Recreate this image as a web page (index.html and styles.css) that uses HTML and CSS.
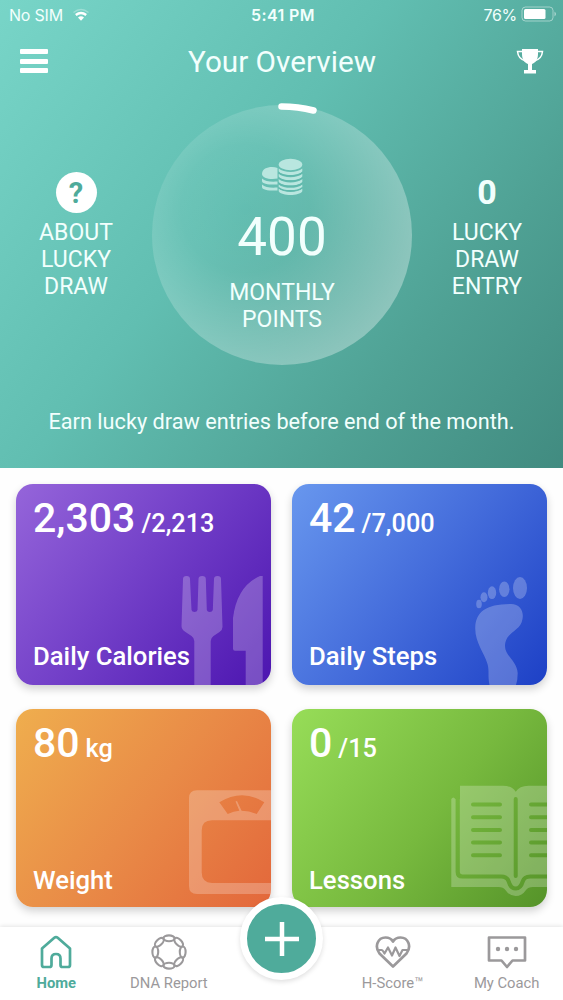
FILE: index.html
```
<!DOCTYPE html>
<html lang="en">
<head>
  <meta charset="UTF-8" />
  <meta name="viewport" content="width=device-width, initial-scale=1" />
  <title>Your Overview</title>
  <link rel="stylesheet" href="styles.css">
</head>
<body>

<section class="hero">
  <div class="status-bar">
    <div class="carrier">
      <span>No SIM</span>
      <svg width="18" height="14" viewBox="0 0 18 14" fill="none" stroke="#fff">
        <path d="M1.500 4.500Q9-1.500 16.500 4.500" stroke-width="1.500" opacity=".3"/>
        <path d="M3.800 7Q9 2.800 14.200 7" stroke-width="2.400"/>
        <path d="M6 9.500Q9 7 12 9.500L9 12.800z" fill="#fff" stroke="none"/>
      </svg>
    </div>
    <div class="time">5:41 PM</div>
    <div class="battery">
      <span>76%</span>
      <svg width="36" height="16" viewBox="0 0 36 16">
        <rect x="1" y="1" width="31" height="14" rx="3.500" fill="none" stroke="#fff" stroke-opacity=".45"/>
        <rect x="3" y="3" width="21.500" height="10" rx="1.500" fill="#fff"/>
        <path d="M33.500 5.500q3 2.500 0 5z" fill="#fff" opacity=".5"/>
      </svg>
    </div>
  </div>

  <header>
    <button class="menu-btn" aria-label="Menu"><span></span><span></span><span></span></button>
    <h1>Your Overview</h1>
    <button class="trophy-btn" aria-label="Rewards">
      <svg width="28" height="27" viewBox="0 0 28 27">
        <path d="M6 1h16v5c0 6-3 9-6 10v5h-4v-5C9 15 6 12 6 6z" fill="#fff"/>
        <path d="M7 3.500H1.500C2 9 5 12 10 13M21 3.500h5.500C26 9 23 12 18 13" fill="none" stroke="#fff" stroke-width="1.500"/>
        <path d="M12 18.500h4v3.500h4v3.500H8V22h4z" fill="#fff"/>
      </svg>
    </button>
  </header>

  <div class="points-row">
    <div class="side">
      <div class="help">?</div>
      <p>ABOUT<br>LUCKY<br>DRAW</p>
    </div>

    <div class="ring">
      <svg class="progress" viewBox="0 0 260 260">
        <path d="M129.500 1.500A129 129 0 0 1 161.500 5.500" fill="none" stroke="#fff" stroke-width="6.500" stroke-linecap="round"/>
      </svg>
      <svg class="coins" width="42" height="37" viewBox="0 0 42 37">
        <g fill="#b9e6df">
          <path d="M1 16c0-7 10-8 15.500-6v10.500C9 22 1 20 1 16z"/>
          <path d="M1 20.500c3 3 9 3.500 15.500 3v3C9 27 1 26 1 23zM1 26.500c3 3 9 3.500 15.500 3v3C9 33 1 32 1 29z"/>
          <ellipse cx="29.500" cy="6.500" rx="11.800" ry="5.700"/>
          <path id="coin" d="M17.700 10.500c5 4.500 18.600 4.500 23.600 0v2.700c-3 5-20.600 5-23.600 0z"/>
          <use href="#coin" y="5.300"/>
          <use href="#coin" y="10.600"/>
          <use href="#coin" y="15.900"/>
          <use href="#coin" y="20"/>
        </g>
        <path d="M17.700 14.700c5 4 18.600 4 23.600 0M17.700 20c5 4 18.600 4 23.600 0M17.700 25.300c5 4 18.600 4 23.600 0M17.700 29.700c5 4 18.600 4 23.600 0" fill="none" stroke="#60b9ad" stroke-width="1.400"/>
      </svg>
      <div class="points">400</div>
      <p>MONTHLY<br>POINTS</p>
    </div>

    <div class="side">
      <div class="entries">0</div>
      <p>LUCKY<br>DRAW<br>ENTRY</p>
    </div>
  </div>

  <p class="message">Earn lucky draw entries before end of the month.</p>
</section>

<main class="cards">
  <div class="card calories">
    <svg class="card-art" viewBox="0 0 255 201">
      <path d="M167 95q0-3 3.500-3t3.500 3l1.500 31q.5 2 3 2t3-2L182.500 95q0-3 3.700-3t3.600 3l1 31q.5 2 3 2t3-2L198 95q0-3 3.500-3t3.500 3l1.500 48q0 3-3 5l-6 4q-2.800 2-2.800 5v44h-16.400v-44q0-3-2.800-5l-6-4q-4-2.500-4-6z"/>
      <path d="M246.700 92v109h-17v-34.300H219q-2 0-2-2V134q4-32 27-42z"/>
    </svg>
    <div class="value"><span>2,303</span><small>/2,213</small></div>
    <div class="label">Daily Calories</div>
  </div>

  <div class="card steps">
    <svg class="card-art" viewBox="0 0 255 201">
      <ellipse cx="187" cy="120" rx="2.800" ry="4.300"/>
      <ellipse cx="192" cy="113.300" rx="3.500" ry="5"/>
      <ellipse cx="200" cy="108.700" rx="4.200" ry="6.400"/>
      <ellipse cx="212.300" cy="105.300" rx="5.200" ry="7.700"/>
      <ellipse cx="228" cy="104" rx="7" ry="11"/>
      <path d="M183.300 143C184 128 194 120 219 120c9 0 13 7 11.500 15-2 13-17 12-17.500 27 0 10 12 15 12.700 27q0 7-1.700 12h-26.500c-2-9 0-14-2-21-3-11-13-22-12.200-37z"/>
    </svg>
    <div class="value"><span>42</span><small>/7,000</small></div>
    <div class="label">Daily Steps</div>
  </div>

  <div class="card weight">
    <svg class="card-art" viewBox="0 0 255 198">
      <path fill-rule="evenodd" d="M181 81.300h80V185h-80q-8 0-8-8V89.300q0-8 8-8zM196 111.300q-10.300 0-10.300 10.300v42q0 10.300 10.300 10.300h65v-62.600zM203.300 93.300L211.700 105q6-3 11.700-3.300L219.500 92.500l1.500-.5 4.600 9.700q8 0 15.100 3.300l7.600-11.700q-22-14-45 0z"/>
    </svg>
    <div class="value"><span>80</span><small>kg</small></div>
    <div class="label">Weight</div>
  </div>

  <div class="card lessons">
    <svg class="card-art" viewBox="0 0 255 198">
      <mask id="book">
        <path fill="#fff" d="M159.300 90q2-3 4 0H168V76.700h43q9 0 12.700 6 3.700-6 12.700-6H260V178h-19q-5 0-7 3-4 6-10.300 6t-10.300-6q-2-3-7-3h-47.100z"/>
        <path fill="none" stroke="#000" stroke-width="4.200" d="M165.700 84v79q0 4.500 4.500 4.500h39q6 0 7.500 5 2 7 7 7t7-7q1.500-5 7.500-5H260"/>
        <path fill="none" stroke="#000" stroke-width="4" stroke-linecap="round" d="M223.700 90v77M181 95.500h27M181 108.300h27M181 121h27M181 133.500h27M181 146.300h27M239 95.500h25M239 108.300h25M239 121h25M239 133.500h25M239 146.300h25"/>
      </mask>
      <rect width="255" height="198" mask="url(#book)"/>
    </svg>
    <div class="value"><span>0</span><small>/15</small></div>
    <div class="label">Lessons</div>
  </div>
</main>

<nav>
  <a class="active">
    <svg width="36" height="36" viewBox="0 0 36 36">
      <path d="M4 14.500L16.300 3.800q1.700-1.500 3.400 0L32 14.500V31q0 2-2 2h-5.500q-2 0-2-2v-6.500q0-4.500-4.500-4.500t-4.500 4.500V31q0 2-2 2H6q-2 0-2-2z"/>
    </svg>
    Home
  </a>
  <a>
    <svg width="36" height="36" viewBox="0 0 36 36">
      <g transform="translate(18 18)" stroke-width="2.100">
        <g id="dna">
          <ellipse cx="0" cy="-13.700" rx="5.500" ry="2.900"/>
          <ellipse cx="0" cy="-13.700" rx="5.500" ry="2.900" transform="rotate(45)"/>
          <ellipse cx="0" cy="-13.700" rx="5.500" ry="2.900" transform="rotate(90)"/>
          <ellipse cx="0" cy="-13.700" rx="5.500" ry="2.900" transform="rotate(135)"/>
        </g>
        <use href="#dna" transform="rotate(180)"/>
      </g>
    </svg>
    DNA Report
  </a>
  <div class="fab-slot">
    <button class="fab" aria-label="Add">
      <svg width="36" height="36" viewBox="0 0 36 36"><path d="M18 1v34M1 18h34"/></svg>
    </button>
  </div>
  <a class="score">
    <svg width="36" height="36" viewBox="0 0 36 36">
      <path d="M18 32.500L4.500 19.500C-1 12 3 3.500 10.500 3.500 14 3.500 16.500 5 18 7.500c1.500-2.500 4-4 7.500-4C33 3.500 37 12 31.500 19.500z"/>
      <path d="M2.500 16h4q1 0 1.500 1l1.500 2.500 3.500-6 4 8 3.500-8 4 8.500 3-6h5.500" stroke-width="2.200"/>
    </svg>
    <span>H-Score™</span>
  </a>
  <a>
    <svg width="40" height="36" viewBox="0 0 40 36">
      <path d="M2 3.500h36v23H25.500L20 33l-5.500-6.500H2z"/>
      <g fill="#9b999b" stroke="none"><circle cx="11" cy="15" r="2.200"/><circle cx="20" cy="15" r="2.200"/><circle cx="29" cy="15" r="2.200"/></g>
    </svg>
    My Coach
  </a>
</nav>

</body>
</html>
```
FILE: styles.css
```
:root {
  --primary-color: #4fab9b;
  --muted: #9b999b;
}

* {
  box-sizing: border-box;
}
body {
  margin: 0;
  height: 1000px;
  font-family: Roboto, sans-serif;
  background: #fefefe;
  display: flex;
  flex-direction: column;
  overflow: hidden;
}
p, h1 {
  margin: 0;
  font-weight: 400;
}
svg {
  display: block;
}
button {
  border: none;
  background: transparent;
  padding: 0;
}

/* Top section */
.hero {
  height: 468px;
  background: linear-gradient(128deg, #78d5c8 0%, #61beb1 42%, #4fa194 74%, #418b80 100%);
  color: #f2fffd;
}
.status-bar {
  display: grid;
  grid-template-columns: 1fr auto 1fr;
  align-items: center;
  height: 30px;
  padding: 0 6px 0 9px;
  font-family: Inter, sans-serif;
  font-size: 16px;
}
.carrier, .battery {
  display: flex;
  align-items: center;
  gap: 9px;
}
.carrier {
  letter-spacing: -0.2px;
}
.battery {
  justify-content: flex-end;
  gap: 4px;
  letter-spacing: -0.3px;
}
.battery svg {
  margin-top: -2px;
}
.time {
  font-weight: 600;
  letter-spacing: 0.4px;
}
header {
  display: flex;
  align-items: center;
  justify-content: space-between;
  height: 62px;
  padding: 0 19px 0 20px;
}
header h1 {
  font-size: 29.7px;
}
.menu-btn {
  display: flex;
  flex-direction: column;
  gap: 4.5px;
}
.menu-btn span {
  width: 28px;
  height: 5px;
  border-radius: 1px;
  background: #fff;
}

.points-row {
  display: grid;
  grid-template-columns: 152px 260px 151px;
  padding-top: 14px;
  font-size: 23px;
  line-height: 27px;
  text-align: center;
}
.side {
  padding-top: 65px;
}
.help {
  width: 41px;
  height: 41px;
  margin: 1px auto 6px;
  border-radius: 50%;
  background: #fff;
  color: var(--primary-color);
  font-size: 29px;
  font-weight: 700;
  line-height: 42px;
}
.entries {
  height: 48px;
  font-size: 34px;
  font-weight: 700;
  line-height: 43px;
}
.side:last-child {
  padding-right: 1px;
}
.ring {
  position: relative;
  height: 260px;
  margin-top: -1px;
  border-radius: 50%;
  padding-top: 53px;
  background: radial-gradient(circle at 36% 40%, rgba(255,255,255,0.02) 0%, rgba(255,255,255,0.05) 28%, rgba(255,255,255,0.36) 80%);
}
.progress {
  position: absolute;
  inset: 0;
  overflow: visible;
}
.coins {
  margin: 0 auto;
}
.points {
  margin-top: 11px;
  font-size: 53px;
  line-height: 62px;
}
.ring p {
  margin-top: 11px;
}
.message {
  margin-top: 43px;
  font-size: 21.7px;
  line-height: 28px;
  text-align: center;
}

/* Cards */
.cards {
  display: grid;
  grid-template-columns: 255px 255px;
  grid-template-rows: 201px 198px;
  gap: 24px 21px;
  padding: 16px 16px 0;
  height: 459px;
}
.card {
  position: relative;
  display: flex;
  flex-direction: column;
  justify-content: space-between;
  overflow: hidden;
  padding: 10px 17px 14px;
  border-radius: 17px;
  color: #fff;
  font-weight: 500;
  box-shadow: 0 4px 8px rgba(0,0,0,0.18);
}
.calories { background: linear-gradient(128deg, #9565da, #7441c9 45%, #4c15b0); }
.steps { background: linear-gradient(128deg, #6897ee, #446cdb 50%, #1d40c6); }
.weight { background: linear-gradient(128deg, #efae4e, #e98b47 50%, #e3673b); }
.lessons { background: linear-gradient(128deg, #97dd58, #77b93e 55%, #559329); }
.weight, .lessons {
  padding-bottom: 12px;
}
.card-art {
  position: absolute;
  inset: 0;
  fill: #fff;
  opacity: 0.24;
}
.value {
  position: relative;
  display: flex;
  align-items: baseline;
  gap: 6px;
  font-size: 41px;
  line-height: 49px;
}
.value small {
  font-size: 25.3px;
}
.label {
  position: relative;
  font-size: 25.7px;
  line-height: 30px;
}

/* Bottom navigation */
nav {
  display: grid;
  grid-template-columns: repeat(5, 1fr);
  height: 73px;
  background: #fff;
  box-shadow: 0 -1px 4px rgba(0,0,0,0.1);
}
nav a {
  display: flex;
  flex-direction: column;
  align-items: center;
  padding-top: 7px;
  color: var(--muted);
  font-size: 14.8px;
  line-height: 18px;
  white-space: nowrap;
}
nav a svg {
  margin-bottom: 4px;
  fill: none;
  stroke: currentColor;
  stroke-width: 2.7;
  stroke-linejoin: round;
}
nav .active {
  color: var(--primary-color);
  font-weight: 700;
}
nav .score {
  padding-right: 3px;
}
.fab {
  position: absolute;
  left: 240px;
  top: 897px;
  display: grid;
  place-items: center;
  width: 83px;
  height: 83px;
  border: 7px solid #fff;
  border-radius: 50%;
  background: var(--primary-color);
  box-shadow: 0 2px 5px rgba(0,0,0,0.13);
}
.fab svg {
  fill: none;
  stroke: #fff;
  stroke-width: 4.5;
}
```
